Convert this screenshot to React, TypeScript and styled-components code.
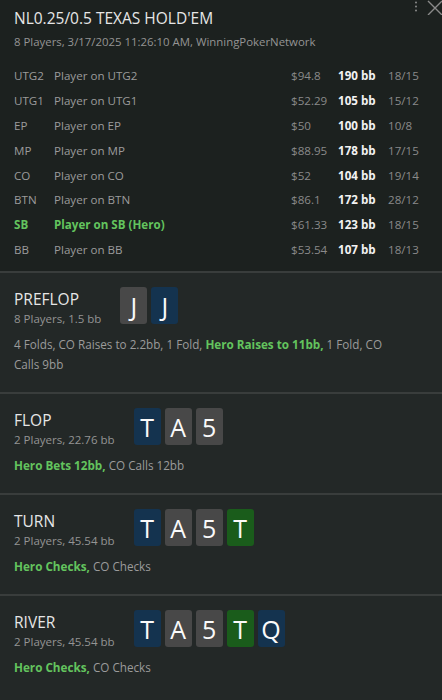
import React from "react";
import styled, { createGlobalStyle } from "styled-components";

const Global = createGlobalStyle`
  html, body { margin: 0; padding: 0; background: #232827; }
  body { font-family: "Open Sans", "Noto Sans", sans-serif; }
  * { box-sizing: border-box; }
`;

const Page = styled.div`
  width: 442px;
  height: 700px;
  overflow: hidden;
  background: #232827;
  position: relative;
`;

const Top = styled.div`
  background: #1c211f;
  padding: 7px 14px 9px;
  border-bottom: 2px solid #393d3c;
`;

const Title = styled.div`
  font-size: 15.5px;
  line-height: 22px;
  color: #e6e6e6;
`;

const Sub = styled.div`
  font-size: 11.4px;
  line-height: 18px;
  color: #949494;
  margin-top: 4px;
  margin-bottom: 12px;
`;

const Row = styled.div<{ $hero?: boolean }>`
  display: grid;
  grid-template-columns: 40px 1fr 47px 50px 40px;
  height: 24.9px;
  align-items: center;
  font-size: 11.6px;
  color: ${(p) => (p.$hero ? "#63c45e" : "#9b9b9b")};
  font-weight: ${(p) => (p.$hero ? 700 : 400)};
`;

const Muted = styled.span`
  color: #8a8a8a;
  font-weight: 400;
`;

const Bb = styled.span`
  color: #f2f2f2;
  font-weight: 700;
`;

const Section = styled.div<{ $last?: boolean }>`
  padding: 14px 14px 18px;
  border-bottom: ${(p) => (p.$last ? "none" : "2px solid #393d3c")};
`;

const Head = styled.div`
  display: flex;
  align-items: flex-start;
  gap: 19px;
`;

const StreetInfo = styled.div`
  display: flex;
  flex-direction: column;
`;

const Street = styled.div`
  font-size: 15.5px;
  line-height: 24px;
  color: #e6e6e6;
`;

const StreetSub = styled.div`
  font-size: 11.5px;
  line-height: 16px;
  color: #949494;
`;

const Cards = styled.div`
  display: flex;
  gap: 4px;
`;

const Card = styled.div<{ $c: "g" | "b" | "n" }>`
  width: 27px;
  height: 37px;
  border-radius: 3px;
  display: flex;
  align-items: center;
  justify-content: center;
  font-size: 25px;
  color: #fafafa;
  background: ${(p) => (p.$c === "g" ? "#484848" : p.$c === "b" ? "#14334f" : "#1a5c1b")};
`;

const Action = styled.div`
  margin-top: 7px;
  max-width: 385px;
  font-size: 11.7px;
  line-height: 20px;
  color: #9b9b9b;
`;

const HeroAct = styled.span`
  color: #63c45e;
  font-weight: 700;
`;

const Corner = styled.div`
  position: absolute;
  top: 0;
  right: 0;
  display: flex;
  align-items: flex-start;
  gap: 9px;
`;

const players = [
  ["UTG2", "Player on UTG2", "$94.8", "190 bb", "18/15"],
  ["UTG1", "Player on UTG1", "$52.29", "105 bb", "15/12"],
  ["EP", "Player on EP", "$50", "100 bb", "10/8"],
  ["MP", "Player on MP", "$88.95", "178 bb", "17/15"],
  ["CO", "Player on CO", "$52", "104 bb", "19/14"],
  ["BTN", "Player on BTN", "$86.1", "172 bb", "28/12"],
  ["SB", "Player on SB (Hero)", "$61.33", "123 bb", "18/15"],
  ["BB", "Player on BB", "$53.54", "107 bb", "18/13"],
];

type C = [string, "g" | "b" | "n"];

const streets: { name: string; sub: string; cards: C[]; hero: string; rest: string; pre?: string }[] = [
  {
    name: "PREFLOP",
    sub: "8 Players, 1.5 bb",
    cards: [["J", "g"], ["J", "b"]],
    pre: "4 Folds, CO Raises to 2.2bb, 1 Fold, ",
    hero: "Hero Raises to 11bb,",
    rest: " 1 Fold, CO Calls 9bb",
  },
  {
    name: "FLOP",
    sub: "2 Players, 22.76 bb",
    cards: [["T", "b"], ["A", "g"], ["5", "g"]],
    hero: "Hero Bets 12bb,",
    rest: " CO Calls 12bb",
  },
  {
    name: "TURN",
    sub: "2 Players, 45.54 bb",
    cards: [["T", "b"], ["A", "g"], ["5", "g"], ["T", "n"]],
    hero: "Hero Checks,",
    rest: " CO Checks",
  },
  {
    name: "RIVER",
    sub: "2 Players, 45.54 bb",
    cards: [["T", "b"], ["A", "g"], ["5", "g"], ["T", "n"], ["Q", "b"]],
    hero: "Hero Checks,",
    rest: " CO Checks",
  },
];

export default function App() {
  return (
    <Page>
      <Global />
      <Corner>
        <svg width="4" height="14" viewBox="0 0 4 14">
          <circle cx="2" cy="2.5" r="1" fill="#8a8a8a" />
          <circle cx="2" cy="6.5" r="1" fill="#8a8a8a" />
          <circle cx="2" cy="10.5" r="1" fill="#8a8a8a" />
        </svg>
        <svg width="15" height="15" viewBox="0 0 15 15">
          <path d="M1 1 L15 15 M15 1 L1 15" stroke="#8a8a8a" strokeWidth="1.4" fill="none" />
        </svg>
      </Corner>
      <Top>
        <Title>NL0.25/0.5 TEXAS HOLD'EM</Title>
        <Sub>8 Players, 3/17/2025 11:26:10 AM, WinningPokerNetwork</Sub>
        {players.map((p) => {
          const hero = p[0] === "SB";
          return (
            <Row key={p[0]} $hero={hero}>
              <span>{p[0]}</span>
              <span>{p[1]}</span>
              <Muted>{p[2]}</Muted>
              <Bb>{p[3]}</Bb>
              <Muted>{p[4]}</Muted>
            </Row>
          );
        })}
      </Top>
      {streets.map((s, i) => (
        <Section key={s.name} $last={i === streets.length - 1}>
          <Head>
            <StreetInfo>
              <Street>{s.name}</Street>
              <StreetSub>{s.sub}</StreetSub>
            </StreetInfo>
            <Cards>
              {s.cards.map((c, j) => (
                <Card key={j} $c={c[1]}>
                  {c[0]}
                </Card>
              ))}
            </Cards>
          </Head>
          <Action>
            {s.pre}
            <HeroAct>{s.hero}</HeroAct>
            {s.rest}
          </Action>
        </Section>
      ))}
    </Page>
  );
}
